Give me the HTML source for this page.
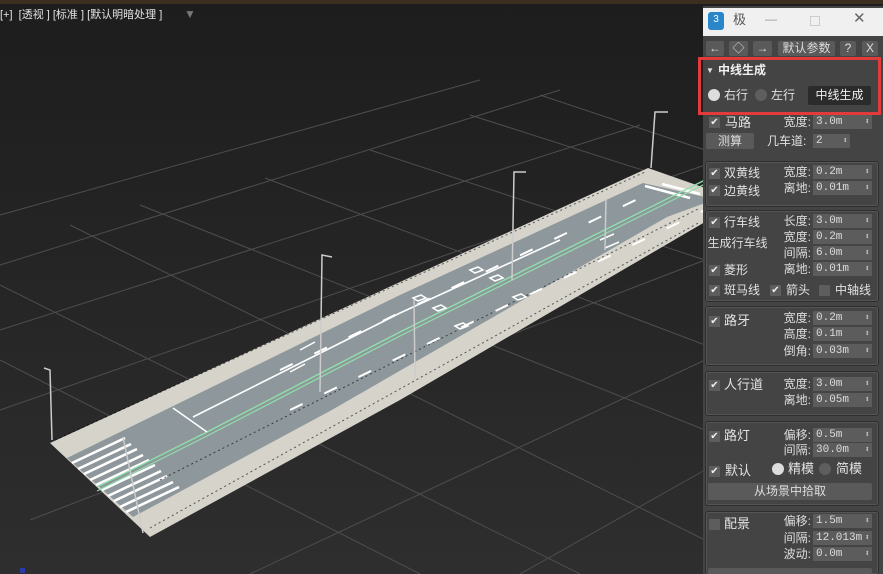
<!DOCTYPE html>
<html><head><meta charset="utf-8"><style>
*{margin:0;padding:0;box-sizing:border-box}
body{width:883px;height:574px;overflow:hidden;background:#222;font-family:"Liberation Sans","Noto Sans CJK SC",sans-serif;position:relative}
.vp{position:absolute;left:0;top:0;width:883px;height:574px}
.t{position:absolute;color:#e2e2e2;font-size:12px;line-height:14px;white-space:nowrap}
.panel{position:absolute;left:703px;top:6px;width:180px;height:568px;background:#444;}
.grp{position:absolute;left:705px;width:174px;border:1px solid #2e2e2e;border-radius:3px;box-shadow:inset 0 0 0 1px #555}
.sp{position:absolute;left:813px;width:59px;height:14px;background:#5c5c5c;color:#ddd;font-size:11px;line-height:14px;padding-left:3px;font-family:"Liberation Mono",monospace}
.sp:after{content:"⬍";position:absolute;right:2px;top:0;font-size:9px;color:#bbb}
.cb{position:absolute;width:11px;height:11px;background:#5d5d5d;color:#eee;font-size:10px;line-height:11px;text-align:center}
.btn{position:absolute;background:#5a5a5a;color:#ddd;font-size:12px;line-height:16px;text-align:center;border-radius:2px}
.lbl{position:absolute;color:#ddd;font-size:12px;line-height:14px;text-align:right;width:60px;left:751px}
.rd{position:absolute;width:12px;height:12px;border-radius:50%;background:#5e5e5e}
</style></head><body>
<svg class="vp" width="883" height="574" viewBox="0 0 883 574">
<defs><linearGradient id="bg" x1="0" y1="0" x2="0" y2="1"><stop offset="0" stop-color="#1d1d1d"/><stop offset="1" stop-color="#2e2e2e"/></linearGradient></defs>
<rect width="883" height="574" fill="url(#bg)"/>
<rect width="883" height="4" fill="#3a2f20"/>
<g stroke="#4e4e4e" stroke-width="1" fill="none">
<path d="M0 265 L560 90 M0 330 L640 125 M0 410 L705 165 M30 520 L705 260 M250 574 L705 360 M520 574 L705 470 M0 215 L480 80"/>
<path d="M265 178 L705 345 M140 205 L705 430 M370 150 L705 260 M470 115 L705 190 M540 95 L705 150 M0 285 L580 574 M70 225 L705 540 M0 360 L420 574"/>
</g>
<polygon points="50,443 648,168 705,188 705,222 400,400 150,537" fill="#d6d3cb"/>
<polygon points="67,458 400,295 643,183 705,197 705,203 667,217 330,411 133,517" fill="#8e979b"/>
<g stroke="#fff" stroke-width="2.6">
<path d="M72 463 L125 438 M78 469 L131 444 M84 474 L137 449 M90 480 L143 455 M96 485 L149 460 M102 490 L155 465 M108 496 L161 471 M114 501 L167 476 M120 507 L173 482 M126 512 L179 487"/>
<path d="M645 186 L690 198 M662 184 L700 194"/>
</g>
<path d="M97 487 L207 432 L400 332 L705 180" stroke="#8fe0ab" stroke-width="1.4" fill="none"/>
<path d="M97 491 L207 436 L400 336 L705 184" stroke="#8fe0ab" stroke-width="1.2" fill="none"/>
<path d="M173 408 L207 432 M193 417 L400 313 L560 240" stroke="#fff" stroke-width="1.6" fill="none"/>
<g stroke="#000" stroke-width="1" stroke-dasharray="2 3" opacity=".6" fill="none">
<path d="M55 440 L645 172 M150 528 L700 222 M160 480 L700 208"/>
</g>
<g stroke="#fff" stroke-width="2" stroke-dasharray="14 24">
<path d="M290 410 L705 210"/><path d="M280 370 L640 198"/>
</g>
<g fill="none" stroke="#fff" stroke-width="1.5">
<path d="M470 270 l8-3 l5 3 l-8 3z M490 278 l8-3 l5 3 l-8 3z M413 298 l8-3 l5 3 l-8 3z M433 308 l8-3 l5 3 l-8 3z M455 326 l8-3 l5 3 l-8 3z M513 297 l8-3 l5 3 l-8 3z"/>
<path d="M600 240 l14-6 M605 248 l14-6 M290 372 l15-8 M300 350 l15-8"/>
</g>
<g stroke="#ccc" stroke-width="1.5" fill="none">
<path d="M52 440 L50 370 L44 368 M143 533 L123 437 M320 392 L322 255 L332 257 M415 378 L414 300 M512 280 L514 172 L526 172 M605 250 L606 198 M651 168 L655 112 L668 112"/>
</g>
<path d="M822 190 L836 110" stroke="#e83a3a" stroke-width="3"/>
<path d="M826 104 L844 118 L830 122z" fill="#e83a3a"/>
<rect x="20" y="568" width="5" height="5" fill="#2a3aa8"/>
</svg>
<div class="t" style="left:0;top:8px;font-size:11px">[+]&nbsp;&nbsp;[透视 ]&nbsp;[标准 ]&nbsp;[默认明暗处理 ]</div>
<div class="t" style="left:184px;top:7px;color:#777">▼</div>

<div class="panel"></div>
<div style="position:absolute;left:703px;top:8px;width:180px;height:28px;background:#f0f0f0"></div>
<div style="position:absolute;left:708px;top:12px;width:16px;height:18px;background:#2a86c8;border-radius:3px;color:#fff;font-size:10px;text-align:center;line-height:16px">3</div>
<div class="t" style="left:733px;top:13px;color:#555;font-size:13px">极</div>
<div class="t" style="left:765px;top:12px;color:#999">—</div>
<div style="position:absolute;left:810px;top:16px;width:10px;height:10px;border:1px solid #ccc"></div>
<div class="t" style="left:853px;top:12px;color:#666;font-size:15px">✕</div>

<div class="btn" style="left:706px;top:41px;width:18px;height:15px;line-height:15px">←</div>
<div class="btn" style="left:729px;top:41px;width:19px;height:15px;line-height:15px">◇</div>
<div class="btn" style="left:753px;top:41px;width:19px;height:15px;line-height:15px">→</div>
<div class="btn" style="left:778px;top:41px;width:57px;height:15px;line-height:15px">默认参数</div>
<div class="btn" style="left:840px;top:41px;width:16px;height:15px;line-height:15px">?</div>
<div class="btn" style="left:862px;top:41px;width:16px;height:15px;line-height:15px">X</div>

<div style="position:absolute;left:698px;top:57px;width:183px;height:58px;border:3px solid #e23b3b"></div>
<div class="t" style="left:706px;top:64px;font-size:8px">▼</div>
<div class="t" style="left:718px;top:63px;font-weight:bold;color:#f0f0f0">中线生成</div>
<div class="rd" style="left:708px;top:89px;background:#ddd"></div>
<div class="t" style="left:724px;top:88px">右行</div>
<div class="rd" style="left:755px;top:89px"></div>
<div class="t" style="left:771px;top:88px">左行</div>
<div class="btn" style="left:808px;top:86px;width:63px;height:19px;line-height:19px;background:#2b2b2b;color:#eee">中线生成</div>

<div class="cb" style="left:709px;top:117px">✔</div><div class="t" style="left:725px;top:116px;font-size:13px">马路</div>
<div class="lbl" style="top:115px">宽度:</div><div class="sp" style="top:115px">3.0m</div>
<div class="btn" style="left:706px;top:133px;width:48px;height:16px">测算</div>
<div class="t" style="left:767px;top:134px">几车道:</div><div class="sp" style="top:134px;width:37px">2</div>

<div class="grp" style="top:161px;height:46px"></div>
<div class="cb" style="left:709px;top:168px">✔</div><div class="t" style="left:724px;top:166px">双黄线</div>
<div class="cb" style="left:709px;top:185px">✔</div><div class="t" style="left:724px;top:184px">边黄线</div>
<div class="lbl" style="top:165px">宽度:</div><div class="sp" style="top:165px">0.2m</div>
<div class="lbl" style="top:181px">离地:</div><div class="sp" style="top:181px">0.01m</div>

<div class="grp" style="top:210px;height:92px"></div>
<div class="cb" style="left:709px;top:217px">✔</div><div class="t" style="left:724px;top:215px">行车线</div>
<div class="btn" style="left:706px;top:235px;width:63px;height:17px;background:transparent">生成行车线</div>
<div class="cb" style="left:709px;top:265px">✔</div><div class="t" style="left:724px;top:263px">菱形</div>
<div class="lbl" style="top:214px">长度:</div><div class="sp" style="top:214px">3.0m</div>
<div class="lbl" style="top:230px">宽度:</div><div class="sp" style="top:230px">0.2m</div>
<div class="lbl" style="top:246px">间隔:</div><div class="sp" style="top:246px">6.0m</div>
<div class="lbl" style="top:262px">离地:</div><div class="sp" style="top:262px">0.01m</div>
<div class="cb" style="left:709px;top:285px">✔</div><div class="t" style="left:724px;top:283px">斑马线</div>
<div class="cb" style="left:770px;top:285px">✔</div><div class="t" style="left:786px;top:283px">箭头</div>
<div class="cb" style="left:819px;top:285px"></div><div class="t" style="left:835px;top:283px">中轴线</div>

<div class="grp" style="top:306px;height:60px"></div>
<div class="cb" style="left:709px;top:316px">✔</div><div class="t" style="left:724px;top:314px;font-size:13px">路牙</div>
<div class="lbl" style="top:311px">宽度:</div><div class="sp" style="top:311px">0.2m</div>
<div class="lbl" style="top:327px">高度:</div><div class="sp" style="top:327px">0.1m</div>
<div class="lbl" style="top:344px">倒角:</div><div class="sp" style="top:344px">0.03m</div>

<div class="grp" style="top:371px;height:45px"></div>
<div class="cb" style="left:709px;top:380px">✔</div><div class="t" style="left:724px;top:378px;font-size:13px">人行道</div>
<div class="lbl" style="top:377px">宽度:</div><div class="sp" style="top:377px">3.0m</div>
<div class="lbl" style="top:393px">离地:</div><div class="sp" style="top:393px">0.05m</div>

<div class="grp" style="top:421px;height:85px"></div>
<div class="cb" style="left:709px;top:431px">✔</div><div class="t" style="left:724px;top:429px;font-size:13px">路灯</div>
<div class="lbl" style="top:428px">偏移:</div><div class="sp" style="top:428px">0.5m</div>
<div class="lbl" style="top:443px">间隔:</div><div class="sp" style="top:443px">30.0m</div>
<div class="cb" style="left:709px;top:466px">✔</div><div class="t" style="left:725px;top:464px;font-size:13px">默认</div>
<div class="rd" style="left:772px;top:463px;background:#ddd"></div><div class="t" style="left:788px;top:462px;font-size:13px">精模</div>
<div class="rd" style="left:819px;top:463px"></div><div class="t" style="left:836px;top:462px;font-size:13px">简模</div>
<div class="btn" style="left:708px;top:483px;width:164px;height:17px">从场景中拾取</div>

<div class="grp" style="top:511px;height:63px;border-bottom:none"></div>
<div class="cb" style="left:709px;top:519px"></div><div class="t" style="left:724px;top:517px;font-size:13px">配景</div>
<div class="lbl" style="top:514px">偏移:</div><div class="sp" style="top:514px">1.5m</div>
<div class="lbl" style="top:531px">间隔:</div><div class="sp" style="top:531px">12.013m</div>
<div class="lbl" style="top:547px">波动:</div><div class="sp" style="top:547px">0.0m</div>
<div class="btn" style="left:708px;top:568px;width:164px;height:6px;overflow:hidden"></div>
</body></html>
